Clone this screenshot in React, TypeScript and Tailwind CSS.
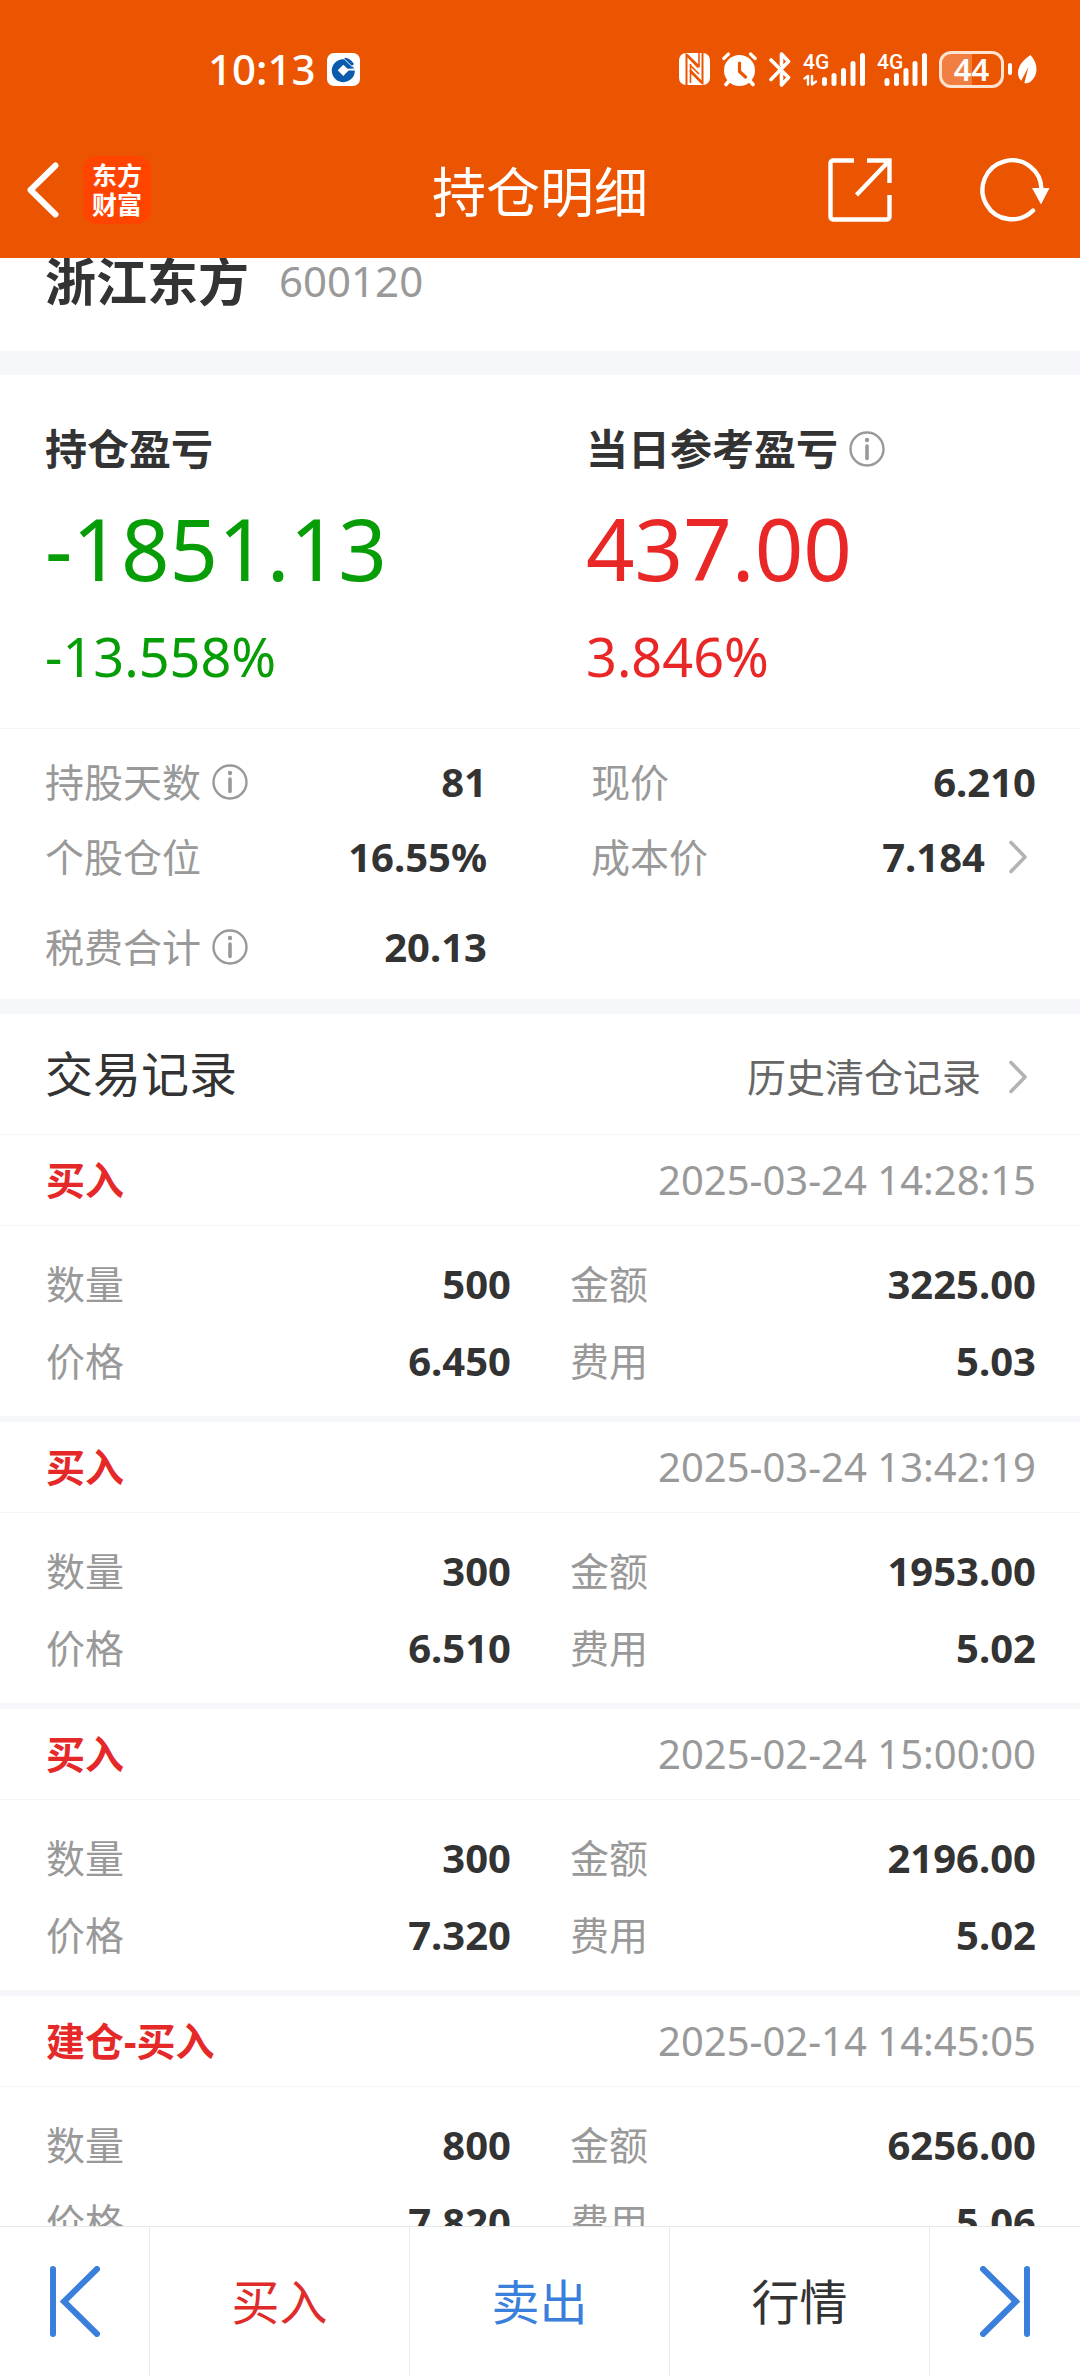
import type { ReactNode } from "react";

type Trade = {
  kind: string;
  time: string;
  quantity: string;
  amount: string;
  price: string;
  fee: string;
};

const trades: Trade[] = [
  { kind: "买入", time: "2025-03-24 14:28:15", quantity: "500", amount: "3225.00", price: "6.450", fee: "5.03" },
  { kind: "买入", time: "2025-03-24 13:42:19", quantity: "300", amount: "1953.00", price: "6.510", fee: "5.02" },
  { kind: "买入", time: "2025-02-24 15:00:00", quantity: "300", amount: "2196.00", price: "7.320", fee: "5.02" },
  { kind: "建仓-买入", time: "2025-02-14 14:45:05", quantity: "800", amount: "6256.00", price: "7.820", fee: "5.06" },
];

function BankLogo() {
  return (
    <svg viewBox="0 0 33 33" className="size-[33px]" aria-hidden="true">
      <rect width="33" height="33" rx="7" fill="#fff" />
      <path
        fill="#0a5bab"
        fillRule="evenodd"
        d="M16 6.2A11.5 11.5 0 1 0 27.8 17.400h-6.200L16.300 23 10.700 17.300 16.300 11.700l4.200 4.100 7-.2-8.500-9z"
      />
      <path d="M18.300 4.700c3.500.3 7 3.200 8.700 6.500l-2.300 1.500-7.700-6.900z" fill="#0a5bab" />
      <path d="M17.300 6l8.200 8" stroke="#fff" strokeWidth="0.900" />
    </svg>
  );
}

function NfcIcon() {
  return (
    <svg viewBox="0 0 31 32" className="w-[31px]" aria-hidden="true">
      <rect width="31" height="32" rx="7" fill="#fff" />
      <path d="M7.500 32V2L19.500 14.500M23.500 0v30L11.500 17.500" stroke="#eb5502" strokeWidth="2" fill="none" />
      <path d="M8 1.500L20 13V0M23 30.500L11.500 19v11" stroke="#eb5502" strokeWidth="1.600" fill="none" />
      <path d="M11.500 11v8L20 27M20 21L11.500 12.500" stroke="#eb5502" strokeWidth="1.600" fill="none" />
    </svg>
  );
}

function AlarmIcon() {
  return (
    <svg viewBox="0 0 35 35" className="w-[35px]" fill="none" stroke="#fff" strokeLinecap="round" aria-hidden="true">
      <circle cx="17.500" cy="18.500" r="15.500" fill="#fff" stroke="none" />
      <path d="M1.800 6.500L6.500 2M33.200 6.500L28.500 2" strokeWidth="3.200" />
      <path d="M7 29l-3 3.500M28 29l3 3.500" strokeWidth="3.600" />
      <path d="M17.500 11v8.500l6 5.500" stroke="#eb5502" strokeWidth="3.200" strokeLinejoin="round" />
    </svg>
  );
}

function BluetoothIcon() {
  return (
    <svg viewBox="0 0 22 35" className="w-[22px]" fill="none" stroke="#fff" strokeWidth="3.600" strokeLinecap="round" strokeLinejoin="round" aria-hidden="true">
      <path d="M2 8l17.500 17.500L12.500 33V22M2 27.500L19.500 9.500 12.500 2v11" />
    </svg>
  );
}

function Signal({ data }: { data?: boolean }) {
  return (
    <div className={data ? "relative w-[62px]" : "relative w-[50px]"}>
      <span className="absolute left-0 top-0 font-['Roboto',sans-serif] text-[21px] font-medium leading-5">4G</span>
      {data ? (
        <svg viewBox="0 0 62 35" className="w-[62px]" fill="none" stroke="#fff" strokeLinecap="round" aria-hidden="true">
          <path d="M21.500 27.500v4M31 23.500v8M40.500 18.500v13M50 11.500v20M59.500 3.500v28" strokeWidth="5" />
          <path d="M1.500 26.500l3.500-2.500v8.500M9 24v8.500l4-3" strokeWidth="2.400" strokeLinejoin="round" />
        </svg>
      ) : (
        <svg viewBox="0 0 50 35" className="w-[50px]" fill="none" stroke="#fff" strokeWidth="5" strokeLinecap="round" aria-hidden="true">
          <path d="M10 28.500v3M19.500 23.500v8M29 18.500v13M38 11.500v20M47.500 3.500v28" />
        </svg>
      )}
    </div>
  );
}

function Battery() {
  return (
    <div className="flex items-center gap-1">
      <div className="relative flex h-[37px] w-[65px] items-center justify-center rounded-[12px] border-[3px] border-[#fde3d0]">
        <div className="absolute inset-y-0 left-0 w-1/2 rounded-l-[9px] bg-white/25" />
        <span className="relative text-[31px] font-semibold leading-8">44</span>
      </div>
      <div className="h-3 w-1 rounded-full bg-white" />
    </div>
  );
}

function LeafIcon() {
  return (
    <svg viewBox="0 0 19 29" className="w-[19px]" aria-hidden="true">
      <path d="M12.500 0C5 5 0 11 0 18c0 3 1 5.500 3.200 7.800L10.500 12 6.300 28c2 .8 4.500.2 6.500-1.500C20.500 20 20.500 9 12.500 0z" fill="#fff" />
    </svg>
  );
}

function InfoIcon() {
  return (
    <svg viewBox="0 0 36 36" className="size-9" fill="none" stroke="#999" aria-hidden="true">
      <circle cx="18" cy="18" r="16.500" strokeWidth="2.400" />
      <path d="M18 15v12.500" strokeWidth="3.600" strokeLinecap="round" />
      <circle cx="18" cy="9" r="2.200" fill="#999" stroke="none" />
    </svg>
  );
}

function InfoButton({ label }: { label: string }) {
  return (
    <button type="button" aria-label={label} className="ml-[11px] shrink-0">
      <InfoIcon />
    </button>
  );
}

function Chevron() {
  return (
    <svg viewBox="0 0 18 34" className="w-[18px] shrink-0" fill="none" stroke="#b3b3b3" strokeWidth="3.600" strokeLinecap="round" strokeLinejoin="round" aria-hidden="true">
      <path d="M2 2.500l14 14.500L2 31.500" />
    </svg>
  );
}

function EdgeArrow({ flip }: { flip?: boolean }) {
  return (
    <svg viewBox="0 0 50 71" className={flip ? "w-[50px] -scale-x-100" : "w-[50px]"} fill="none" stroke="#3a7fdb" strokeWidth="6" strokeLinecap="round" aria-hidden="true">
      <path d="M3 3v65" />
      <path d="M47 3L14 35.500 47 68" />
    </svg>
  );
}

function Field({ label, value, className, after }: { label: ReactNode; value: string; className: string; after?: ReactNode }) {
  return (
    <div className={`flex items-center justify-between ${className}`}>
      <dt className="flex items-center text-[39px] text-[#999]">{label}</dt>
      <dd className="flex items-center text-[40px] font-bold text-[#333]">
        {value}
        {after}
      </dd>
    </div>
  );
}

function TradeRecord({ trade }: { trade: Trade }) {
  return (
    <article className="border-b-[6px] border-[#f6f7fa]">
      <header className="flex h-[91px] items-center justify-between border-b border-[#f3f4f5] pl-[46px] pr-[44px]">
        <h3 className="text-[39px] font-bold text-[#e52828]">{trade.kind}</h3>
        <time className="text-[40px] text-[#999]">{trade.time}</time>
      </header>
      <dl className="grid auto-rows-[77px] grid-cols-2 pb-[17px] pt-[19px]">
        <Field label="数量" value={trade.quantity} className="pl-[46px] pr-[29px]" />
        <Field label="金额" value={trade.amount} className="pl-[30px] pr-[44px]" />
        <Field label="价格" value={trade.price} className="pl-[46px] pr-[29px]" />
        <Field label="费用" value={trade.fee} className="pl-[30px] pr-[44px]" />
      </dl>
    </article>
  );
}

export default function App() {
  return (
    <div className="flex h-screen flex-col bg-white font-['Noto_Sans','Noto_Sans_CJK_SC',sans-serif] leading-[60px] text-[#333]">
      <header className="shrink-0 bg-[#eb5502] text-white">
        <div className="flex h-[138px] items-center justify-between pl-[208px] pr-[43px]">
          <div className="flex items-center gap-[11px]">
            <span className="text-[42px] font-medium">10:13</span>
            <BankLogo />
          </div>
          <div className="flex items-center gap-3">
            <NfcIcon />
            <AlarmIcon />
            <BluetoothIcon />
            <Signal data />
            <Signal />
            <div className="flex items-center gap-[6px]">
              <Battery />
              <LeafIcon />
            </div>
          </div>
        </div>
        <div className="grid h-[120px] grid-cols-[1fr_auto_1fr] items-start">
          <div className="flex items-center gap-6 pl-[26px] pt-[18px]">
            <button type="button" aria-label="返回">
              <svg viewBox="0 0 33 56" className="w-[33px]" fill="none" stroke="#fff" strokeWidth="6" strokeLinecap="round" strokeLinejoin="round" aria-hidden="true">
                <path d="M29.500 3.500L4.500 28l25 24.500" />
              </svg>
            </button>
            <div className="w-[68px] rounded-[14px] bg-[#ff4400] py-[5px] text-center text-[25px] font-semibold leading-[29px]">
              东方
              <br />
              财富
            </div>
          </div>
          <h1 className="pt-6 text-[54px]">持仓明细</h1>
          <div className="flex items-center justify-end gap-[88px] pr-[30px] pt-5">
            <button type="button" aria-label="分享">
              <svg viewBox="0 0 64 64" className="w-16" fill="none" stroke="#fff" strokeWidth="4.400" aria-hidden="true">
                <path d="M26 2.500H5a2.500 2.500 0 0 0-2.500 2.500v54A2.500 2.500 0 0 0 5 61.500h54a2.500 2.500 0 0 0 2.500-2.500V37" />
                <path d="M39 2.500h22.500V25M61 3L28.500 37" />
              </svg>
            </button>
            <button type="button" aria-label="刷新">
              <svg viewBox="0 0 70 64" className="w-[70px]" fill="none" stroke="#fff" strokeWidth="4.400" strokeLinecap="round" aria-hidden="true">
                <path d="M53 52.500A29.500 29.500 0 1 1 61.500 32" />
                <path d="M52 30h17.500L61 46.500z" fill="#fff" stroke="none" />
              </svg>
            </button>
          </div>
        </div>
      </header>

      <main className="min-h-0 flex-1 overflow-y-auto [scrollbar-width:none]">
        <section className="flex h-[93px] items-start gap-[30px] pl-[45px] leading-[46px]">
          <h2 className="text-[51px] font-bold">浙江东方</h2>
          <span className="text-[42px] text-[#999]">600120</span>
        </section>

        <section className="grid grid-cols-2 border-b border-t-[24px] border-b-[#f3f4f5] border-t-[#f6f7fa] pb-[42px] pt-[44px]">
          <div className="pl-[45px] text-[#079d07]">
            <h3 className="text-[42px] font-bold text-[#333]">持仓盈亏</h3>
            <p className="mt-[29px] text-[85px] leading-[80px]">-1851.13</p>
            <p className="mt-[38px] text-[54px]">-13.558%</p>
          </div>
          <div className="pl-[46px] text-[#e92727]">
            <div className="flex items-center">
              <h3 className="text-[42px] font-bold text-[#333]">当日参考盈亏</h3>
              <InfoButton label="当日参考盈亏说明" />
            </div>
            <p className="mt-[29px] text-[85px] leading-[80px]">437.00</p>
            <p className="mt-[38px] text-[54px]">3.846%</p>
          </div>
        </section>

        <dl className="grid grid-cols-2 grid-rows-[75px_75px_105px] pt-[15px]">
          <Field
            label={<>持股天数<InfoButton label="持股天数说明" /></>}
            value="81"
            className="pl-[45px] pr-[53px]"
          />
          <Field label="现价" value="6.210" className="pl-[51px] pr-[44px]" />
          <Field label="个股仓位" value="16.55%" className="pl-[45px] pr-[53px]" />
          <Field
            label="成本价"
            value="7.184"
            className="pl-[51px] pr-[53px]"
            after={
              <button type="button" aria-label="成本价详情" className="ml-6">
                <Chevron />
              </button>
            }
          />
          <Field
            label={<>税费合计<InfoButton label="税费合计说明" /></>}
            value="20.13"
            className="pl-[45px] pr-[53px]"
          />
        </dl>

        <section className="border-t-[15px] border-[#f6f7fa]">
          <div className="flex h-[121px] items-baseline justify-between border-b border-[#f3f4f5] pl-[45px] pr-[53px] pt-[30px]">
            <h2 className="text-[48px]">交易记录</h2>
            <a href="#history" className="flex items-center gap-7 text-[39px] text-[#666]">
              历史清仓记录
              <Chevron />
            </a>
          </div>
          {trades.map((trade) => (
            <TradeRecord key={trade.time} trade={trade} />
          ))}
        </section>
      </main>

      <nav className="grid h-[150px] shrink-0 grid-cols-[150fr_260fr_260fr_260fr_150fr] divide-x divide-[#ebebeb] border-t border-[#e8e8e8] bg-white text-[48px]">
        <button type="button" aria-label="上一只" className="flex items-center justify-center">
          <EdgeArrow />
        </button>
        <button type="button" className="text-[#e02b2b]">买入</button>
        <button type="button" className="text-[#3a7fdb]">卖出</button>
        <button type="button">行情</button>
        <button type="button" aria-label="下一只" className="flex items-center justify-center">
          <EdgeArrow flip />
        </button>
      </nav>
    </div>
  );
}
